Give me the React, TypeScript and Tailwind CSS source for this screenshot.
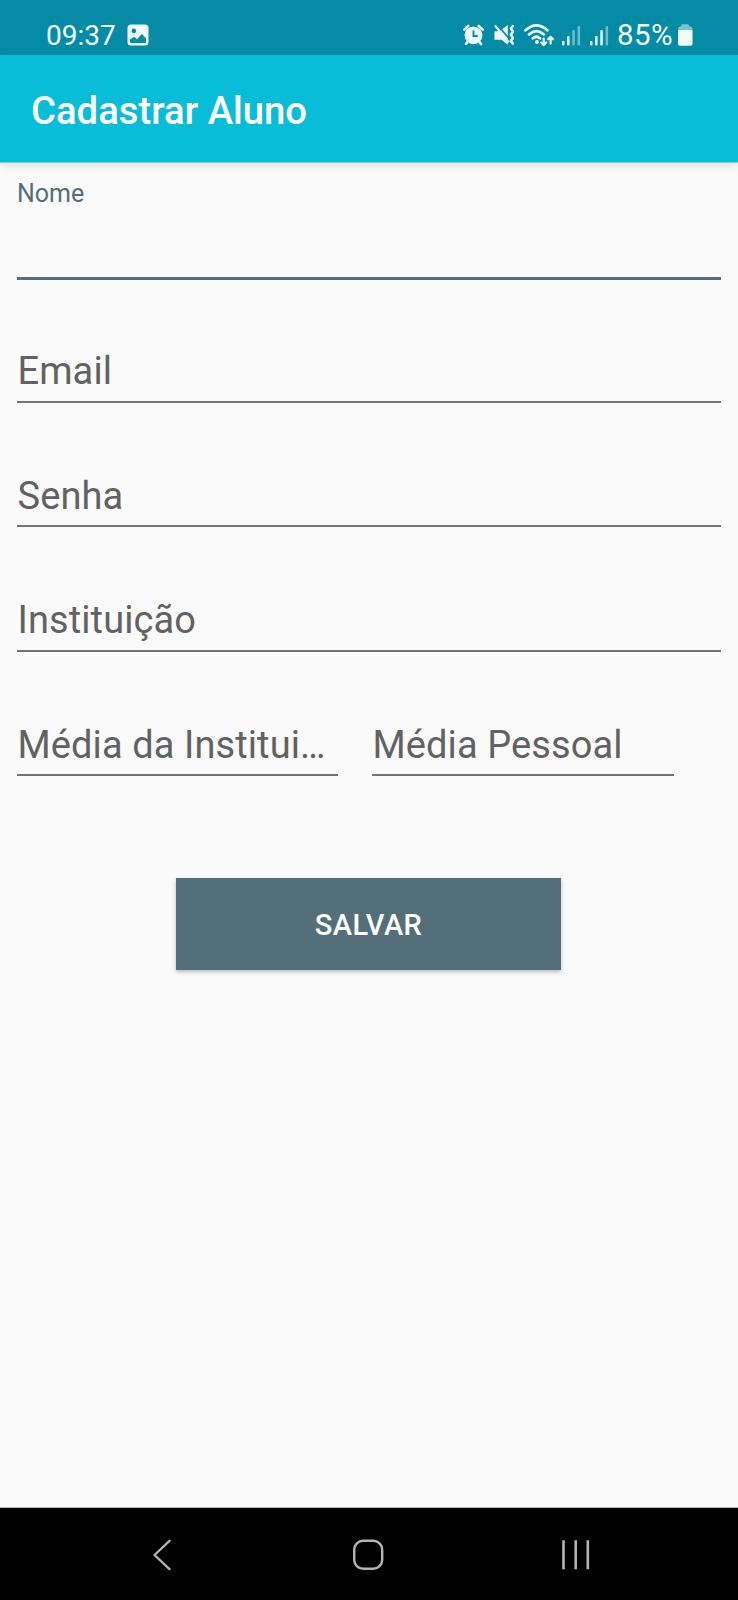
import React from "react";

function PictureIcon() {
  return (
    <svg className="ml-[11px] h-[22px] w-[22px]" viewBox="0 0 22 22">
      <path
        fillRule="evenodd"
        fill="#f0fbff"
        d="M4 .5h14a3.5 3.5 0 0 1 3.5 3.5v14a3.5 3.5 0 0 1-3.500 3.500H4A3.500 3.500 0 0 1 .5 18V4A3.500 3.500 0 0 1 4 .5ZM6.800 4.600a2.300 2.300 0 1 0 0 4.600 2.300 2.300 0 0 0 0-4.600ZM3 15.500V18q0 1 1 1h14q1 0 1-1v-3.500l-3.600-4q-.6-.6-1.200 0L10 15.200l-2.200-2q-.6-.5-1.200 0Z"
      />
    </svg>
  );
}

function AlarmIcon() {
  return (
    <svg className="h-[22px] w-[21px]" viewBox="0 0 21 22" fill="none">
      <circle cx="10.500" cy="11.300" r="8.900" fill="#eafaff" />
      <path d="M1.300 5.600 5.300 2M19.700 5.600 15.700 2M4.800 17.500l-1.800 2.500M16.200 17.500l1.800 2.500" stroke="#eafaff" strokeWidth="2.600" strokeLinecap="round" />
      <path d="M10.500 6.500v5.500h4.300" stroke="#058ba5" strokeWidth="1.900" />
    </svg>
  );
}

function MuteIcon() {
  return (
    <svg className="ml-[10px] h-[22px] w-[21px]" viewBox="0 0 21 22" fill="none">
      <path d="M.5 7.300h5L13.800 1v19.800L7.500 15.700h-7Z" fill="#eafaff" />
      <path d="M3.400 .8 15.200 14.800" stroke="#058ba5" strokeWidth="1.700" />
      <path d="M1.600 2.200 14.200 17.600" stroke="#eafaff" strokeWidth="2.200" strokeLinecap="round" />
      <path d="M18.800 2 16.800 4.500l2.200 3-2.200 3.200 2.200 3.200-2.200 3 2 2.600" stroke="#eafaff" strokeWidth="2.500" strokeLinecap="round" strokeLinejoin="round" />
    </svg>
  );
}

function WifiIcon() {
  return (
    <svg className="ml-[9px] h-[24px] w-[31px]" viewBox="0 0 31 24" fill="none" stroke="#eafaff" strokeLinecap="round">
      <path d="M1.500 7.300Q12.500-2.700 23.300 7.300M5 11.400Q12.500 4.900 19.900 11.400M8.800 15.300Q12.500 12.200 16 15.300" strokeWidth="2.700" />
      <circle cx="13" cy="19" r="1.900" fill="#eafaff" stroke="none" />
      <path d="M19.700 15.500v6M17.200 19.500l2.500 2.500 2.500-2.500M26.600 20.500v-6M24.100 16.300l2.500-2.500 2.500 2.500" strokeWidth="2.200" strokeLinejoin="round" />
    </svg>
  );
}

function SignalIcon({ weak = false }: { weak?: boolean }) {
  return (
    <svg className="h-[21px] w-[19px]" viewBox="0 0 19 21" fill="#eafaff">
      <rect x="0" y="16" width="2.500" height="4.500" rx="1" />
      <rect x="5.100" y="11" width="2.500" height="9.500" rx="1" />
      <rect x="10.300" y="5" width="2.500" height="15.500" rx="1" opacity={weak ? 0.45 : 1} />
      <rect x="15.600" y="1" width="2.500" height="19.500" rx="1" opacity="0.450" />
    </svg>
  );
}

function BatteryIcon() {
  return (
    <svg className="ml-[4px] h-[22px] w-[15px]" viewBox="0 0 15 22" fill="#f0fbff">
      <path d="M3.500 2.300V1.500Q3.500.3 4.700.3h5.100Q11 .3 11 1.500v.8q3.500 0 3.500 3v1.400H0V5.300q0-3 3.500-3Z" opacity="0.500" />
      <path d="M0 6h14.500v13.200q0 2.500-2.500 2.500H2.500q-2.500 0-2.500-2.500Z" />
    </svg>
  );
}

function StatusBar() {
  return (
    <div className="flex h-[55px] items-center bg-[#058ba5] pl-[46px] pr-[45px] pt-[15px] text-[28px] leading-[40px] text-[#f0fbff]">
      <span className="pt-px">09:37</span>
      <PictureIcon />
      <div className="ml-auto flex items-center">
        <AlarmIcon />
        <MuteIcon />
        <WifiIcon />
        <div className="ml-[7px] flex gap-[9px]">
          <SignalIcon weak />
          <SignalIcon />
        </div>
        <span className="ml-[8px] w-[57px] whitespace-nowrap text-[29.500px] tracking-[0.400px]">85%</span>
        <BatteryIcon />
      </div>
    </div>
  );
}

function Field({ label, className = "", gap = "pb-[7px]" }: { label: string; className?: string; gap?: string }) {
  return (
    <div className={`flex flex-col justify-end ${className}`}>
      <span
        className={`whitespace-nowrap border-b-2 border-[#737373] pl-[0.500px] text-[38px] leading-[44px] tracking-[0.100px] text-[#626262] ${gap}`}
      >
        {label}
      </span>
    </div>
  );
}

function NavBar() {
  return (
    <nav className="flex h-[93px] items-center border-t border-[#b5b5b5] bg-black pl-[151px] pr-[147px] pt-px text-[#b4b4b4]">
      <svg className="h-[32px] w-[20px]" viewBox="0 0 20 32" fill="none" stroke="currentColor" strokeWidth="2.300" strokeLinecap="round" strokeLinejoin="round">
        <path d="M18.500 1.800 3.500 16l15 14.200" />
      </svg>
      <svg className="ml-[181px] h-[32px] w-[32px]" viewBox="0 0 32 32" fill="none" stroke="currentColor" strokeWidth="2.400">
        <rect x="2.200" y="1.700" width="28" height="28" rx="9" />
      </svg>
      <svg className="ml-auto h-[32px] w-[30px]" viewBox="0 0 30 32" fill="none" stroke="currentColor" strokeWidth="2.600">
        <path d="M2.500 1.200v29M14.700 1.200v29M26.800 1.200v29" />
      </svg>
    </nav>
  );
}

export default function App() {
  return (
    <div className="flex h-[1600px] w-[738px] flex-col bg-[#fafafa] font-['Roboto',sans-serif]">
      <StatusBar />
      <header className="flex h-[108px] items-center border-b border-[#7fcfdc] bg-[#09bcd8] pl-[31px] pt-[5px] shadow-[0_3px_8px_rgba(0,0,0,0.1)]">
        <h1 className="text-[38.250px] font-medium leading-[46px] text-white">Cadastrar Aluno</h1>
      </header>

      <main className="flex flex-1 flex-col pl-[17px] pr-[17px]">
        <div className="flex h-[117px] flex-col border-b-[3px] border-[#546e7a] pt-[16px]">
          <span className="text-[25px] leading-[30px] text-[#546e7a]">Nome</span>
        </div>
        <Field label="Email" className="h-[123px]" gap="pb-[8px]" />
        <Field label="Senha" className="h-[124px]" />
        <Field label="Instituição" className="h-[125px]" gap="pb-[8px]" />
        <div className="flex">
          <Field label="Média da Institui…" className="h-[124px] w-[321px]" />
          <Field label="Média Pessoal" className="ml-[34px] h-[124px] w-[302px]" />
        </div>
        <button className="ml-[159px] mt-[102px] h-[92px] w-[385px] bg-[#546e7a] pt-[4px] text-[29px] font-medium tracking-[0.400px] text-white shadow-[0_2px_4px_rgba(0,0,0,0.25)]">
          SALVAR
        </button>
      </main>

      <NavBar />
    </div>
  );
}
